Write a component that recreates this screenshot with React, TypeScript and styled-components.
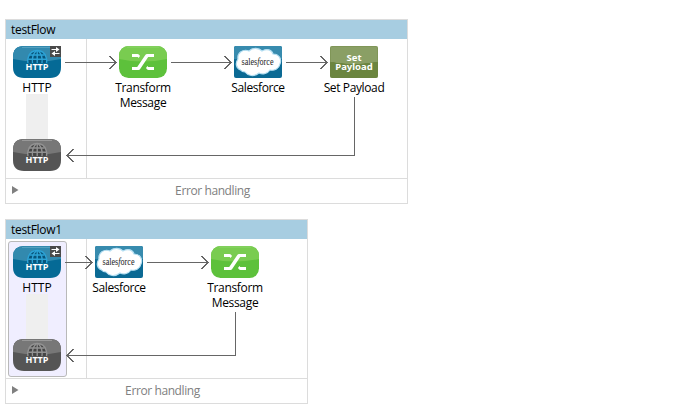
import React, { useId } from "react";
import styled, { createGlobalStyle } from "styled-components";

const GlobalStyle = createGlobalStyle`
  * { box-sizing: border-box; }
  body { margin: 0; background: #fff; }
`;

const Canvas = styled.main`
  display: flex;
  flex-direction: column;
  align-items: flex-start;
  gap: 15px;
  width: 676px;
  height: 406px;
  padding: 19px 0 0 5px;
  overflow: hidden;
  background: #fff;
  color: #000;
  font: 12px/15px "Open Sans", "Noto Sans", sans-serif;
`;

const Panel = styled.section<{ $width: number }>`
  display: flex;
  flex-direction: column;
  width: ${(p) => p.$width}px;
  height: 185px;
  border: 1px solid #dcdcdc;
`;

const Header = styled.header`
  height: 19px;
  padding: 2px 0 0 5px;
  background: #a7cde1;
`;

const Body = styled.div`
  position: relative;
  display: grid;
  grid-template-columns: 81px 1fr;
  height: 139px;
`;

const SourceColumn = styled.div`
  padding: 2px 0 0 2px;
  border-right: 1px solid #dcdcdc;
`;

const SourceGroup = styled.div<{ $selected: boolean }>`
  display: flex;
  flex-direction: column;
  align-items: flex-start;
  width: 59px;
  height: 136px;
  padding: 4px 0 0 4px;
  border: 1px solid ${(p) => (p.$selected ? "#b9b9b9" : "transparent")};
  border-radius: 3px;
  background: ${(p) => (p.$selected ? "#f0eeff" : "transparent")};
`;

const Stem = styled.div`
  display: flex;
  justify-content: center;
  width: 22px;
  height: 61px;
  margin-left: 13px;
  background: linear-gradient(transparent 16px, #efefef 16px);
`;

const Node = styled.div<{ $x: number }>`
  position: absolute;
  left: ${(p) => p.$x}px;
  top: 7px;
  display: flex;
  flex-direction: column;
  align-items: center;
  width: 48px;
`;

const Label = styled.span<{ $spacing?: number; $width?: number }>`
  flex: none;
  margin-top: 2px;
  width: ${(p) => (p.$width ? `${p.$width}px` : "auto")};
  text-align: center;
  white-space: ${(p) => (p.$width ? "normal" : "nowrap")};
  letter-spacing: ${(p) => p.$spacing ?? 0}px;
`;

const Title = styled.span`
  display: block;
  letter-spacing: -0.32px;
`;

const Wires = styled.svg`
  position: absolute;
  inset: 0;
  width: 100%;
  height: 100%;
  fill: none;
  stroke: #666;
  shape-rendering: crispEdges;
`;

const Footer = styled.footer`
  display: grid;
  grid-template-columns: 12px 1fr;
  align-items: start;
  height: 25px;
  padding: 4px 0 0 6px;
  border-top: 1px solid #dcdcdc;
  color: #808080;
`;

const Expander = styled.svg`
  width: 7px;
  height: 8px;
  margin-top: 3px;
`;

const FooterText = styled.span`
  justify-self: center;
  padding-right: 6px;
  letter-spacing: -0.4px;
`;

const Tile = styled.svg`
  display: block;
  flex: none;
  width: 48px;
  height: 32px;
`;

function HttpIcon({ response = false }: { response?: boolean }) {
  const id = useId();
  const globe = response ? "#929292" : "#2da3d6";
  return (
    <Tile viewBox="0 0 48 32">
      <defs>
        <clipPath id={id}><path d="M11 0H37Q48 0 48 11V21Q48 32 37 32H11Q0 32 0 21V11Q0 0 11 0Z" /></clipPath>
      </defs>
      <g clipPath={`url(#${id})`}>
        <rect width="48" height="32" fill={response ? "#555" : "#056a96"} />
        <path d="M0 0H48V13Q24 18 0 13Z" fill={response ? "#777" : "#3289ae"} />
        <path d="M9 1.5H39" stroke={response ? "#999" : "#55a0bf"} />
      </g>
      <g fill="none" stroke={globe} strokeWidth="1.4">
        <path d="M15 17A9.3 9.3 0 0 1 15.4 11A9.2 9.2 0 0 1 33 11A9.3 9.3 0 0 1 33.5 17" fill={response ? "#444" : "#07547a"} />
        <path d="M24.2 5V17M19.5 17Q18.5 9.5 23 5M29 17Q30 9.5 25.5 5M17 9H31.5M15.2 13.2H33.3" />
      </g>
      <text x="24" y="24" textAnchor="middle" textLength="23" lengthAdjust="spacingAndGlyphs" fill="#fff" fontFamily="Open Sans, sans-serif" fontWeight="700" fontSize="9.5">HTTP</text>
      {!response && (
        <g>
          <rect x="37" width="11" height="11" fill="#4a4a4a" />
          <path d="M38.5 3.5H44M41 7.5H46.5" stroke="#fff" />
          <path d="M43 1L46.5 3.5L43 6ZM42 5L38.5 7.5L42 10Z" fill="#fff" />
        </g>
      )}
    </Tile>
  );
}

function TransformIcon() {
  const id = useId();
  return (
    <Tile viewBox="0 0 48 32">
      <defs>
        <clipPath id={id}><rect width="48" height="32" rx="9.5" /></clipPath>
      </defs>
      <g clipPath={`url(#${id})`}>
        <rect width="48" height="32" fill="#5dc13b" />
        <path d="M0 0H48V13Q24 18 0 13Z" fill="#79cc50" />
        <path d="M8 1H40" stroke="#8bd568" />
      </g>
      <g fill="#fff">
        <path d="M13 21H18.2L26.5 8.8Q27 8 28 8H35V11H29.2L21 23.2Q20.5 24 19.5 24H13Z" />
        <path d="M13 8H18.5Q20 8 21 10L19.6 12L18.8 11H13Z" />
        <path d="M35 24H29.5Q28 24 27 22L28.4 20L29.2 21H35Z" />
      </g>
    </Tile>
  );
}

function SalesforceIcon() {
  return (
    <Tile viewBox="0 0 48 32">
      <rect width="48" height="32" rx="2" fill="#0b6a94" />
      <path d="M0 2Q0 0 2 0H46Q48 0 48 2V13Q24 18 0 13Z" fill="#378bae" />
      <path d="M6.5 24C2 22 1 17 4 13C3 7 9 2.5 15 5C19 1 25 2 28 5C33 2 38 4 39 8C45 8 48 13 46 18C45 23 40 25 36 24C33 28.5 28 28.5 25 27C20 31 14 30 11 26Q8 26 6.5 24Z" fill="#fff" stroke="#b5dff2" strokeWidth="1.2" />
      <text x="7.5" y="18.9" textLength="32" lengthAdjust="spacingAndGlyphs" fill="#222" fontFamily="Liberation Serif, serif" fontSize="9.5">
        sales<tspan fontStyle="italic">f</tspan>orce
      </text>
    </Tile>
  );
}

const PayloadTile = styled.div`
  display: grid;
  place-items: center;
  flex: none;
  width: 48px;
  height: 32px;
  border-radius: 2px;
  background: radial-gradient(ellipse 50px 18px at 24px 0, #8a9f65 98%, #6b853f 100%);
  box-shadow: inset 0 0 0 1px #6b853f55;
`;

const PayloadText = styled.div`
  width: 46px;
  color: #fff;
  font: 700 9.5px/9px "Noto Sans", "Open Sans", sans-serif;
  text-align: center;
`;

function PayloadIcon() {
  return <PayloadTile><PayloadText>Set Payload</PayloadText></PayloadTile>;
}

const nodeKinds = {
  transform: { Icon: TransformIcon, label: "Transform Message", width: 60, spacing: -0.33 },
  salesforce: { Icon: SalesforceIcon, label: "Salesforce", width: 0, spacing: -0.4 },
  payload: { Icon: PayloadIcon, label: "Set Payload", width: 0, spacing: -0.38 },
};

interface FlowProps {
  title: string;
  width: number;
  selected?: boolean;
  nodes: { kind: keyof typeof nodeKinds; x: number }[];
  arrows: [number, number][];
  returnX: number;
  returnY: number;
}

function Flow({ title, width, selected = false, nodes, arrows, returnX, returnY }: FlowProps) {
  return (
    <Panel $width={width}>
      <Header><Title>{title}</Title></Header>
      <Body>
        <SourceColumn>
          <SourceGroup $selected={selected}>
            <HttpIcon />
            <Stem><Label>HTTP</Label></Stem>
            <HttpIcon response />
          </SourceGroup>
        </SourceColumn>
        {nodes.map(({ kind, x }) => {
          const { Icon, label, width: labelWidth, spacing } = nodeKinds[kind];
          return (
            <Node key={kind} $x={x}>
              <Icon />
              <Label $width={labelWidth} $spacing={spacing}>{label}</Label>
            </Node>
          );
        })}
        <Wires>
          {arrows.map(([from, to]) => (
            <path key={from} d={`M${from} 23.5H${to}M${to - 6.5} 17L${to} 23.5L${to - 6.5} 30`} />
          ))}
          <path d={`M${returnX} ${returnY}V116.5H61M67.5 110L61 116.5L67.5 123`} />
        </Wires>
      </Body>
      <Footer>
        <Expander viewBox="0 0 7 8"><path d="M0 0L6.5 4L0 8Z" fill="#808080" /></Expander>
        <FooterText>Error handling</FooterText>
      </Footer>
    </Panel>
  );
}

export default function App() {
  return (
    <Canvas>
      <GlobalStyle />
      <Flow
        title="testFlow"
        width={403}
        nodes={[{ kind: "transform", x: 113 }, { kind: "salesforce", x: 228 }, { kind: "payload", x: 324 }]}
        arrows={[[59, 110], [165, 225], [280, 321]]}
        returnX={348.5}
        returnY={58}
      />
      <Flow
        title="testFlow1"
        width={303}
        selected
        nodes={[{ kind: "salesforce", x: 89 }, { kind: "transform", x: 205 }]}
        arrows={[[59, 86], [141, 202]]}
        returnX={229.5}
        returnY={73}
      />
    </Canvas>
  );
}
